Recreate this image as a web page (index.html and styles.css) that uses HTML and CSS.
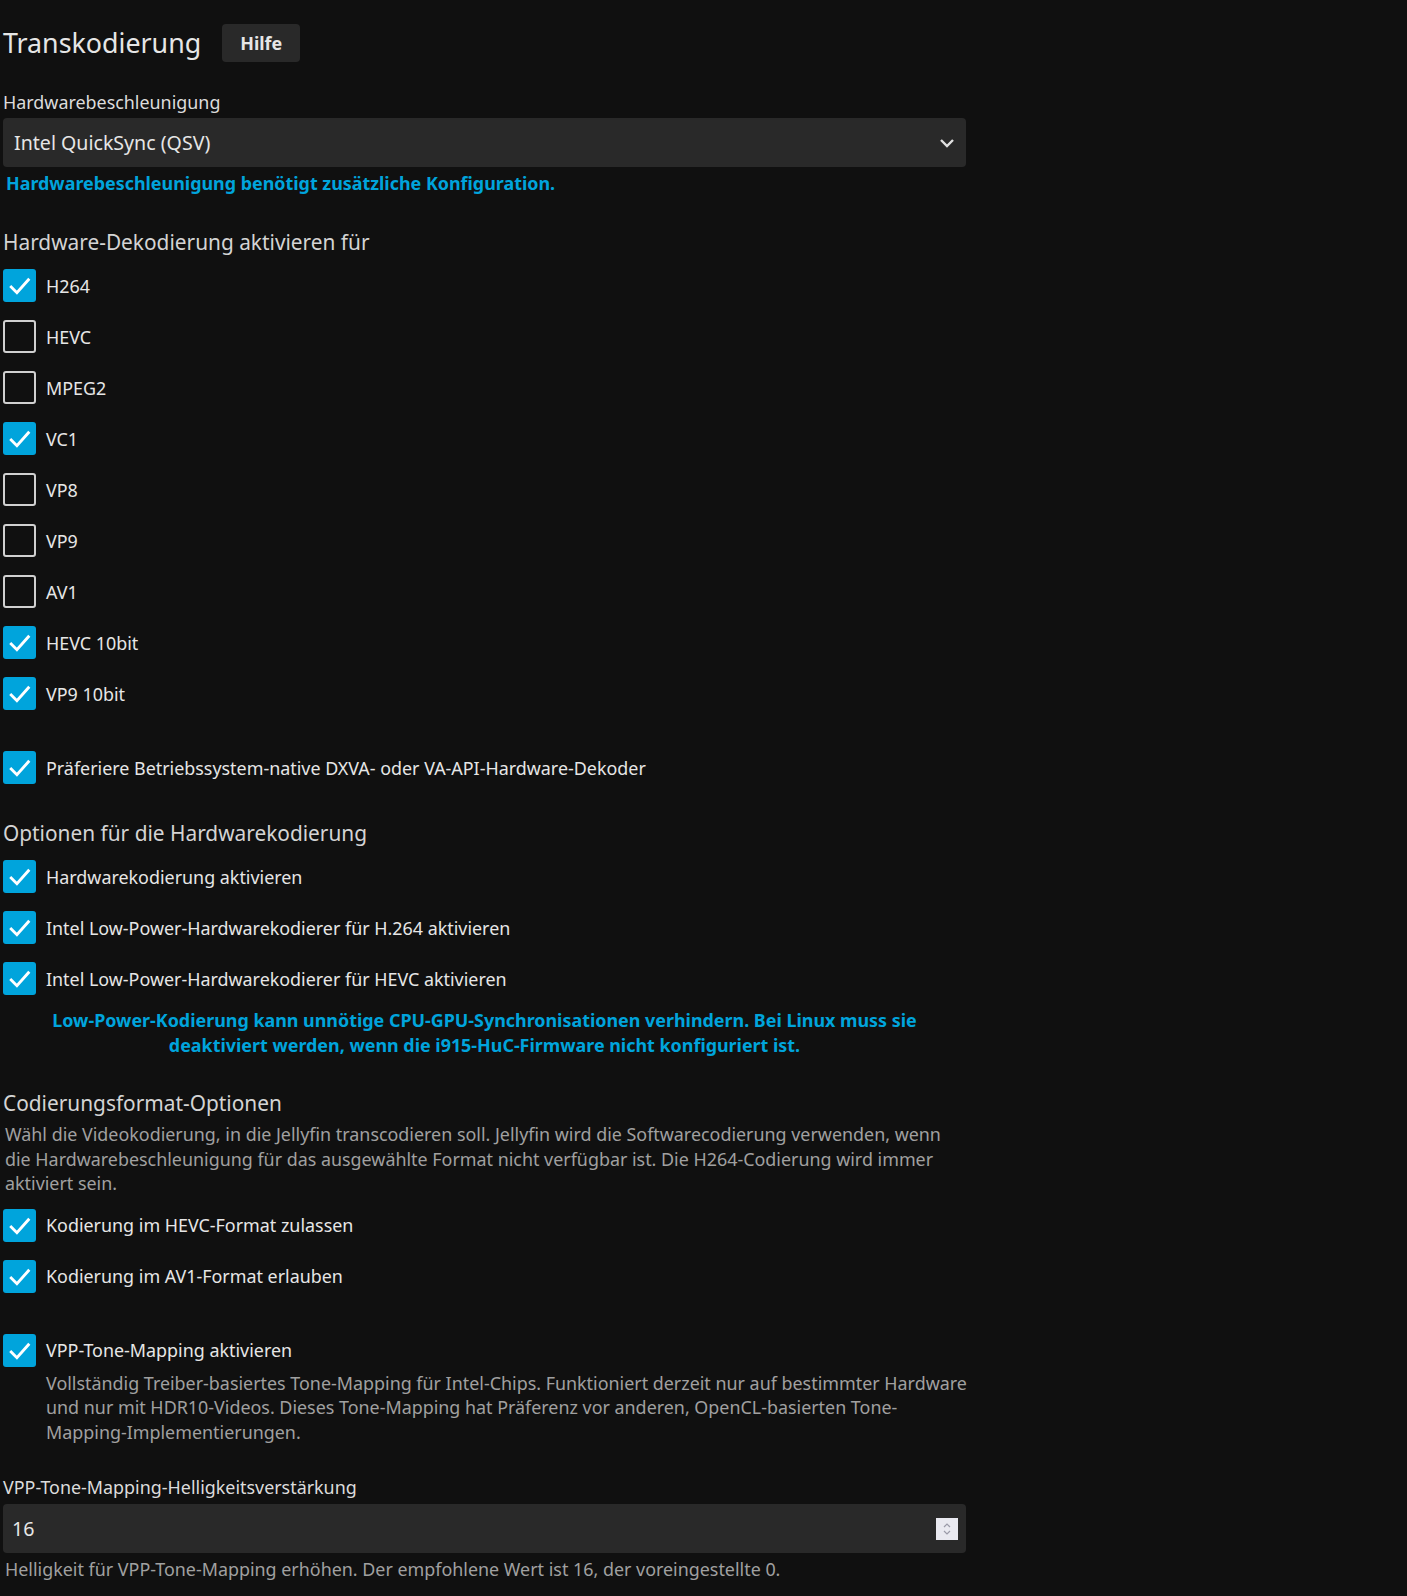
FILE: index.html
```html
<!DOCTYPE html>
<html lang="de">
<head>
<meta charset="utf-8">
<title>Transkodierung</title>
<link rel="stylesheet" href="styles.css">
</head>
<body>
<div class="page">
  <div class="title-row">
    <h1 class="title">Transkodierung</h1>
    <button class="help-btn">Hilfe</button>
  </div>

  <label class="field-label lbl-accel">Hardwarebeschleunigung</label>
  <div class="select">
    <span>Intel QuickSync (QSV)</span>
    <svg class="chev" width="16" height="10" viewBox="0 0 16 10"><polyline points="2,2 8,8 14,2" fill="none" stroke="#e0e0e0" stroke-width="2.4"/></svg>
  </div>
  <div class="note">Hardwarebeschleunigung benötigt zusätzliche Konfiguration.</div>

  <h2 class="sec sec-1">Hardware-Dekodierung aktivieren für</h2>
  <div class="rows rows-1">
    <div class="cb-row"><span class="box on"><svg viewBox="0 0 32 32"><polyline points="7,16.5 13.5,23 25.5,9.5"/></svg></span><span class="cb-text">H264</span></div>
    <div class="cb-row"><span class="box"></span><span class="cb-text">HEVC</span></div>
    <div class="cb-row"><span class="box"></span><span class="cb-text">MPEG2</span></div>
    <div class="cb-row"><span class="box on"><svg viewBox="0 0 32 32"><polyline points="7,16.5 13.5,23 25.5,9.5"/></svg></span><span class="cb-text">VC1</span></div>
    <div class="cb-row"><span class="box"></span><span class="cb-text">VP8</span></div>
    <div class="cb-row"><span class="box"></span><span class="cb-text">VP9</span></div>
    <div class="cb-row"><span class="box"></span><span class="cb-text">AV1</span></div>
    <div class="cb-row"><span class="box on"><svg viewBox="0 0 32 32"><polyline points="7,16.5 13.5,23 25.5,9.5"/></svg></span><span class="cb-text">HEVC 10bit</span></div>
    <div class="cb-row"><span class="box on"><svg viewBox="0 0 32 32"><polyline points="7,16.5 13.5,23 25.5,9.5"/></svg></span><span class="cb-text">VP9 10bit</span></div>
  </div>
  <div class="rows rows-2">
    <div class="cb-row"><span class="box on"><svg viewBox="0 0 32 32"><polyline points="7,16.5 13.5,23 25.5,9.5"/></svg></span><span class="cb-text">Präferiere Betriebssystem-native DXVA- oder VA-API-Hardware-Dekoder</span></div>
  </div>

  <h2 class="sec sec-2">Optionen für die Hardwarekodierung</h2>
  <div class="rows rows-3">
    <div class="cb-row"><span class="box on"><svg viewBox="0 0 32 32"><polyline points="7,16.5 13.5,23 25.5,9.5"/></svg></span><span class="cb-text">Hardwarekodierung aktivieren</span></div>
    <div class="cb-row"><span class="box on"><svg viewBox="0 0 32 32"><polyline points="7,16.5 13.5,23 25.5,9.5"/></svg></span><span class="cb-text">Intel Low-Power-Hardwarekodierer für H.264 aktivieren</span></div>
    <div class="cb-row"><span class="box on"><svg viewBox="0 0 32 32"><polyline points="7,16.5 13.5,23 25.5,9.5"/></svg></span><span class="cb-text">Intel Low-Power-Hardwarekodierer für HEVC aktivieren</span></div>
  </div>
  <div class="note note-center">Low-Power-Kodierung kann unnötige CPU-GPU-Synchronisationen verhindern. Bei Linux muss sie deaktiviert werden, wenn die i915-HuC-Firmware nicht konfiguriert ist.</div>

  <h2 class="sec sec-3">Codierungsformat-Optionen</h2>
  <p class="desc desc-1">Wähl die Videokodierung, in die Jellyfin transcodieren soll. Jellyfin wird die Softwarecodierung verwenden, wenn die Hardwarebeschleunigung für das ausgewählte Format nicht verfügbar ist. Die H264-Codierung wird immer aktiviert sein.</p>
  <div class="rows rows-4">
    <div class="cb-row"><span class="box on"><svg viewBox="0 0 32 32"><polyline points="7,16.5 13.5,23 25.5,9.5"/></svg></span><span class="cb-text">Kodierung im HEVC-Format zulassen</span></div>
    <div class="cb-row"><span class="box on"><svg viewBox="0 0 32 32"><polyline points="7,16.5 13.5,23 25.5,9.5"/></svg></span><span class="cb-text">Kodierung im AV1-Format erlauben</span></div>
  </div>
  <div class="rows rows-5">
    <div class="cb-row"><span class="box on"><svg viewBox="0 0 32 32"><polyline points="7,16.5 13.5,23 25.5,9.5"/></svg></span><span class="cb-text">VPP-Tone-Mapping aktivieren</span></div>
  </div>
  <p class="desc desc-2">Vollständig Treiber-basiertes Tone-Mapping für Intel-Chips. Funktioniert derzeit nur auf bestimmter Hardware und nur mit HDR10-Videos. Dieses Tone-Mapping hat Präferenz vor anderen, OpenCL-basierten Tone-Mapping-Implementierungen.</p>

  <label class="field-label lbl-vpp">VPP-Tone-Mapping-Helligkeitsverstärkung</label>
  <div class="input">
    <span>16</span>
    <span class="spin">
      <svg width="10" height="16" viewBox="0 0 10 16"><polyline points="2,6 5,3 8,6" fill="none" stroke="#9a9aa8" stroke-width="1.2"/><polyline points="2,10 5,13 8,10" fill="none" stroke="#9a9aa8" stroke-width="1.2"/></svg>
    </span>
  </div>
  <p class="desc desc-3">Helligkeit für VPP-Tone-Mapping erhöhen. Der empfohlene Wert ist 16, der voreingestellte 0.</p>
</div>
</body>
</html>
```

FILE: styles.css
```css
* { box-sizing: border-box; }
html, body { margin: 0; padding: 0; }
body {
  background: #101010;
  color: #e0e0e0;
  font-family: "Noto Sans", "Open Sans", sans-serif;
  font-size: 17.9px;
}
.page {
  width: 966px;
  padding-left: 3px;
  padding-bottom: 20px;
}
.title-row {
  display: flex;
  align-items: center;
  gap: 21px;
  padding-top: 24px;
  height: 62px;
}
.title {
  margin: 0;
  font-size: 26.8px;
  font-weight: 400;
  color: #e6e6e6;
  line-height: 38px;
}
.help-btn {
  height: 38px;
  width: 78px;
  background: #292929;
  color: #e6e6e6;
  border: none;
  border-radius: 4px;
  font-family: inherit;
  font-size: 17.9px;
  font-weight: 700;
  padding: 0;
}
.field-label {
  display: block;
  line-height: 24px;
  color: #dcdcdc;
}
.lbl-accel { margin-top: 28px; }
.select {
  margin-top: 4px;
  height: 49px;
  background: #292929;
  border-radius: 4px;
  display: flex;
  align-items: center;
  justify-content: space-between;
  padding: 0 11px 0 11px;
  font-size: 19.6px;
  color: #e6e6e6;
}
.chev { display: block; }
.note {
  margin-top: 4px;
  line-height: 24px;
  color: #00a4dc;
  font-weight: 700;
  padding-left: 3px;
}
.note-center {
  text-align: center;
  line-height: 25px;
  padding: 0 30px;
}
.sec {
  margin: 0;
  font-size: 20.85px;
  font-weight: 400;
  line-height: 30px;
  color: #d4d4d4;
}
.sec-1 { margin-top: 32px; }
.sec-2 { margin-top: 25px; }
.sec-3 { margin-top: 30px; }
.rows { display: flex; flex-direction: column; }
.rows-1 { margin-top: 3px; }
.rows-2 { margin-top: 23px; }
.rows-3 { margin-top: 3px; }
.rows-4 { margin-top: 4px; }
.rows-5 { margin-top: 23px; }
.note-center { margin-top: 4px; }
.cb-row {
  height: 51px;
  display: flex;
  align-items: center;
  gap: 10px;
}
.box {
  width: 33px;
  height: 33px;
  border: 2px solid #d0d0d0;
  border-radius: 3px;
  flex: none;
  display: block;
}
.box.on {
  border: none;
  background: #00a4dc;
}
.box svg {
  display: block;
  width: 33px;
  height: 33px;
}
.box svg polyline {
  fill: none;
  stroke: #fff;
  stroke-width: 2.8;
}
.cb-text { color: #e6e6e6; }
.desc {
  margin: 0;
  color: #a0a0a0;
  line-height: 24.5px;
}
.desc-1 { margin-top: 4px; padding-left: 2px; }
.desc-2 { margin-top: -5px; margin-right: -6px; padding-left: 43px; }
.lbl-vpp { margin-top: 31px; }
.input {
  margin-top: 5px;
  height: 49px;
  background: #292929;
  border-radius: 4px;
  display: flex;
  align-items: center;
  justify-content: space-between;
  padding: 0 8px 0 9px;
  font-size: 19.6px;
  color: #e6e6e6;
}
.spin {
  width: 22px;
  height: 22px;
  background: #e9e9f0;
  display: flex;
  align-items: center;
  justify-content: center;
}
.desc-3 { margin-top: 4px; padding-left: 2px; }
```
